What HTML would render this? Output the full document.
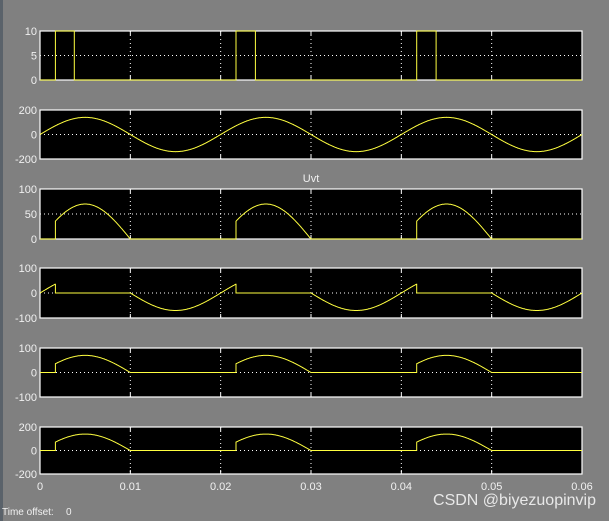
<!DOCTYPE html><html><head><style>
body{margin:0;width:609px;height:521px;background:#808080;overflow:hidden;font-family:"Liberation Sans",sans-serif}
</style></head><body>
<svg id="s" width="609" height="521" xmlns="http://www.w3.org/2000/svg" style="position:absolute;left:0;top:0">
<rect x="0" y="0" width="3" height="521" fill="#5a626a"/>
</svg>
<script>
var s=document.getElementById('s'),ns='http://www.w3.org/2000/svg';
function el(t,a,txt){var e=document.createElementNS(ns,t);for(var k in a)e.setAttribute(k,a[k]);if(txt!=null)e.textContent=txt;s.appendChild(e);return e;}
var X0=40,X1=582;function px(t){return X0+(X1-X0)*t/0.06;}
var P=2*Math.PI/0.02;
function ph(t){return ((t%0.02)+0.02)%0.02;}
var panels=[
 {t:31,b:80,lo:0,hi:10,labs:['10','5','0'],f:function(t){var p=ph(t);return (p>0.0017&&p<0.0038)?10:0;}},
 {t:110,b:159,lo:-200,hi:200,labs:['200','0','-200'],f:function(t){return 140*Math.sin(P*t);}},
 {t:189,b:239,lo:0,hi:100,labs:['100','50','0'],f:function(t){var p=ph(t);return (p>0.0017&&p<0.01)?70*Math.sin(P*p):0;},title:'Uvt'},
 {t:268,b:318,lo:-100,hi:100,labs:['100','0','-100'],f:function(t){var p=ph(t);if(p<0.0017)return 70*Math.sin(P*p);if(p<0.01)return 0;return 70*Math.sin(P*p);}},
 {t:348,b:397,lo:-100,hi:100,labs:['100','0','-100'],f:function(t){var p=ph(t);return (p>0.0017&&p<0.01)?70*Math.sin(P*p):0;}},
 {t:427,b:474,lo:-200,hi:200,labs:['200','0','-200'],f:function(t){var p=ph(t);return (p>0.0017&&p<0.01)?140*Math.sin(P*p):0;}}
];
panels.forEach(function(q,i){
 el('rect',{x:X0,y:q.t,width:X1-X0,height:q.b-q.t,fill:'#000',stroke:'#fff','stroke-width':1.2});
 var m=(q.t+q.b)/2;
 el('line',{x1:X0,y1:m,x2:X1,y2:m,stroke:'#fff','stroke-dasharray':'1,3','stroke-width':1});
 for(var k=1;k<6;k++){var x=px(k*0.01);el('line',{x1:x,y1:q.t,x2:x,y2:q.b,stroke:'#fff','stroke-dasharray':'1,3','stroke-width':1});
  el('line',{x1:x,y1:q.t,x2:x,y2:q.t+4,stroke:'#fff'});el('line',{x1:x,y1:q.b,x2:x,y2:q.b-4,stroke:'#fff'});}
 [q.t,m,q.b].forEach(function(y,j){el('text',{x:37,y:y+4,'text-anchor':'end','font-size':11,fill:'#f0f0f0'},q.labs[j]);});
 var d='',N=1200,prev=null;
 for(var n=0;n<=N;n++){var t=0.06*n/N,v=q.f(t);var y=q.b-(v-q.lo)/(q.hi-q.lo)*(q.b-q.t);var x=px(t);
  if(prev!==null&&Math.abs(y-prev)>3){d+='L'+x.toFixed(1)+' '+prev.toFixed(1);}
  d+=(n?'L':'M')+x.toFixed(1)+' '+y.toFixed(1);prev=y;}
 el('path',{d:d,fill:'none',stroke:'#ffff40','stroke-width':1});
 if(q.title)el('text',{x:311,y:q.t-7,'text-anchor':'middle','font-size':11,fill:'#f0f0f0'},q.title);
});
['0','0.01','0.02','0.03','0.04','0.05','0.06'].forEach(function(l,k){el('text',{x:px(k*0.01),y:490,'text-anchor':'middle','font-size':11,fill:'#f0f0f0'},l);});
el('text',{x:2,y:515,'font-size':10,fill:'#f0f0f0'},'Time offset:');
el('text',{x:66,y:515,'font-size':10,fill:'#f0f0f0'},'0');
el('text',{x:596,y:505,'text-anchor':'end','font-size':16,fill:'#e8e8e8'},'CSDN @biyezuopinvip');
</script>
</body></html>
